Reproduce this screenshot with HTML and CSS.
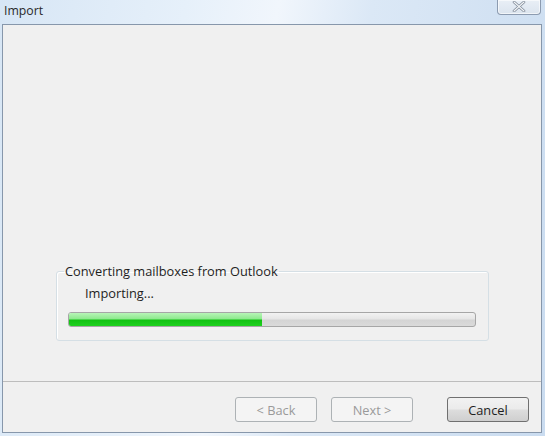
FILE: index.html
```html
<!DOCTYPE html>
<html lang="en">
<head>
  <meta charset="UTF-8" />
  <title>Import</title>
  <link rel="stylesheet" href="styles.css">
</head>
<body>
  <div class="window">
    <div class="titlebar">
      <span class="title">Import</span>
      <button class="close-btn" aria-label="Close">
        <svg width="14" height="11" viewBox="0 0 14 11">
          <path d="M2 1 L12 10 M12 1 L2 10" stroke="#7a8594" stroke-width="2.6" stroke-linecap="round" fill="none"/>
          <path d="M2 1 L12 10 M12 1 L2 10" stroke="#f4f6f8" stroke-width="1.2" stroke-linecap="round" fill="none"/>
        </svg>
      </button>
    </div>
    <div class="client">
      <div class="content">
        <fieldset class="group">
          <legend>Converting mailboxes from Outlook</legend>
          <div class="status">Importing...</div>
          <div class="progress">
            <div class="progress-fill" style="width: 47.5%"></div>
          </div>
        </fieldset>
      </div>
      <div class="footer">
        <button class="btn" disabled>&lt; Back</button>
        <button class="btn" disabled>Next &gt;</button>
        <button class="btn btn-cancel">Cancel</button>
      </div>
    </div>
  </div>
</body>
</html>
```

FILE: styles.css
```css
body {
  margin: 0;
  font-family: "Open Sans", "Noto Sans", sans-serif;
  font-size: 12.8px;
  color: #1e1e1e;
  background: #cfe0f1;
}
.window {
  width: 545px;
  height: 436px;
  display: flex;
  flex-direction: column;
  background: linear-gradient(100deg, #d7e6f5 0%, #e6f0fa 30%, #f1f6fc 45%, #dbe8f6 60%, #cadcf0 100%);
}
.titlebar {
  height: 24px;
  display: flex;
  justify-content: space-between;
  align-items: flex-start;
}
.title {
  margin: 2px 0 0 4px;
  color: #2a2a2a;
  font-size: 12.3px;
}
.close-btn {
  width: 44px;
  height: 15px;
  margin-right: 4px;
  padding: 0 0 2px;
  border: 1px solid #8c9bb0;
  border-top: none;
  border-radius: 0 0 4px 4px;
  background: linear-gradient(#e9eff6, #dbe4ee);
  box-shadow: inset 0 0 0 1px rgb(255 255 255 / 0.6);
  display: flex;
  align-items: center;
  justify-content: center;
}
.client {
  flex: 1;
  margin: 0 3px 3px 2px;
  border: 1px solid #8797ab;
  background: #f0f0f0;
  display: flex;
  flex-direction: column;
}
.content {
  flex: 1;
  display: flex;
  flex-direction: column;
  justify-content: flex-end;
  padding: 0 52px 40px 53px;
}
.group {
  margin: 0;
  padding: 5px 12px 13px 11px;
  border: 1px solid #d5dfe5;
  border-radius: 3px;
  box-shadow: inset 1px 1px 0 #ffffff;
}
.group legend {
  padding: 0 1px;
  margin-left: -4px;
  color: #1e1e1e;
}
.status {
  margin: 0 0 10px 17px;
  line-height: 17px;
}
.progress {
  height: 13px;
  border: 1px solid #a6a6a6;
  border-radius: 3px;
  background: linear-gradient(#f2f2f2 0%, #e6e6e6 45%, #d4d4d4 55%, #dadada 100%);
  overflow: hidden;
}
.progress-fill {
  height: 100%;
  background: linear-gradient(#b8f5b8 0%, #8ee98e 45%, #12c212 55%, #1fd01f 100%);
}
.footer {
  height: 35px;
  border-top: 1px solid #bdbdbd;
  display: flex;
  justify-content: flex-end;
  align-items: flex-start;
  padding: 15px 12px 0 0;
  gap: 14px;
}
.btn {
  width: 82px;
  height: 25px;
  font-family: inherit;
  font-size: 12.8px;
  border: 1px solid #adb2b5;
  border-radius: 3px;
  background: #f4f4f4;
  color: #9a9a9a;
}
.btn-cancel {
  margin-left: 20px;
  border-color: #707070;
  color: #1e1e1e;
  background: linear-gradient(#f2f2f2 0%, #ebebeb 48%, #dddddd 52%, #cfcfcf 100%);
}
```
